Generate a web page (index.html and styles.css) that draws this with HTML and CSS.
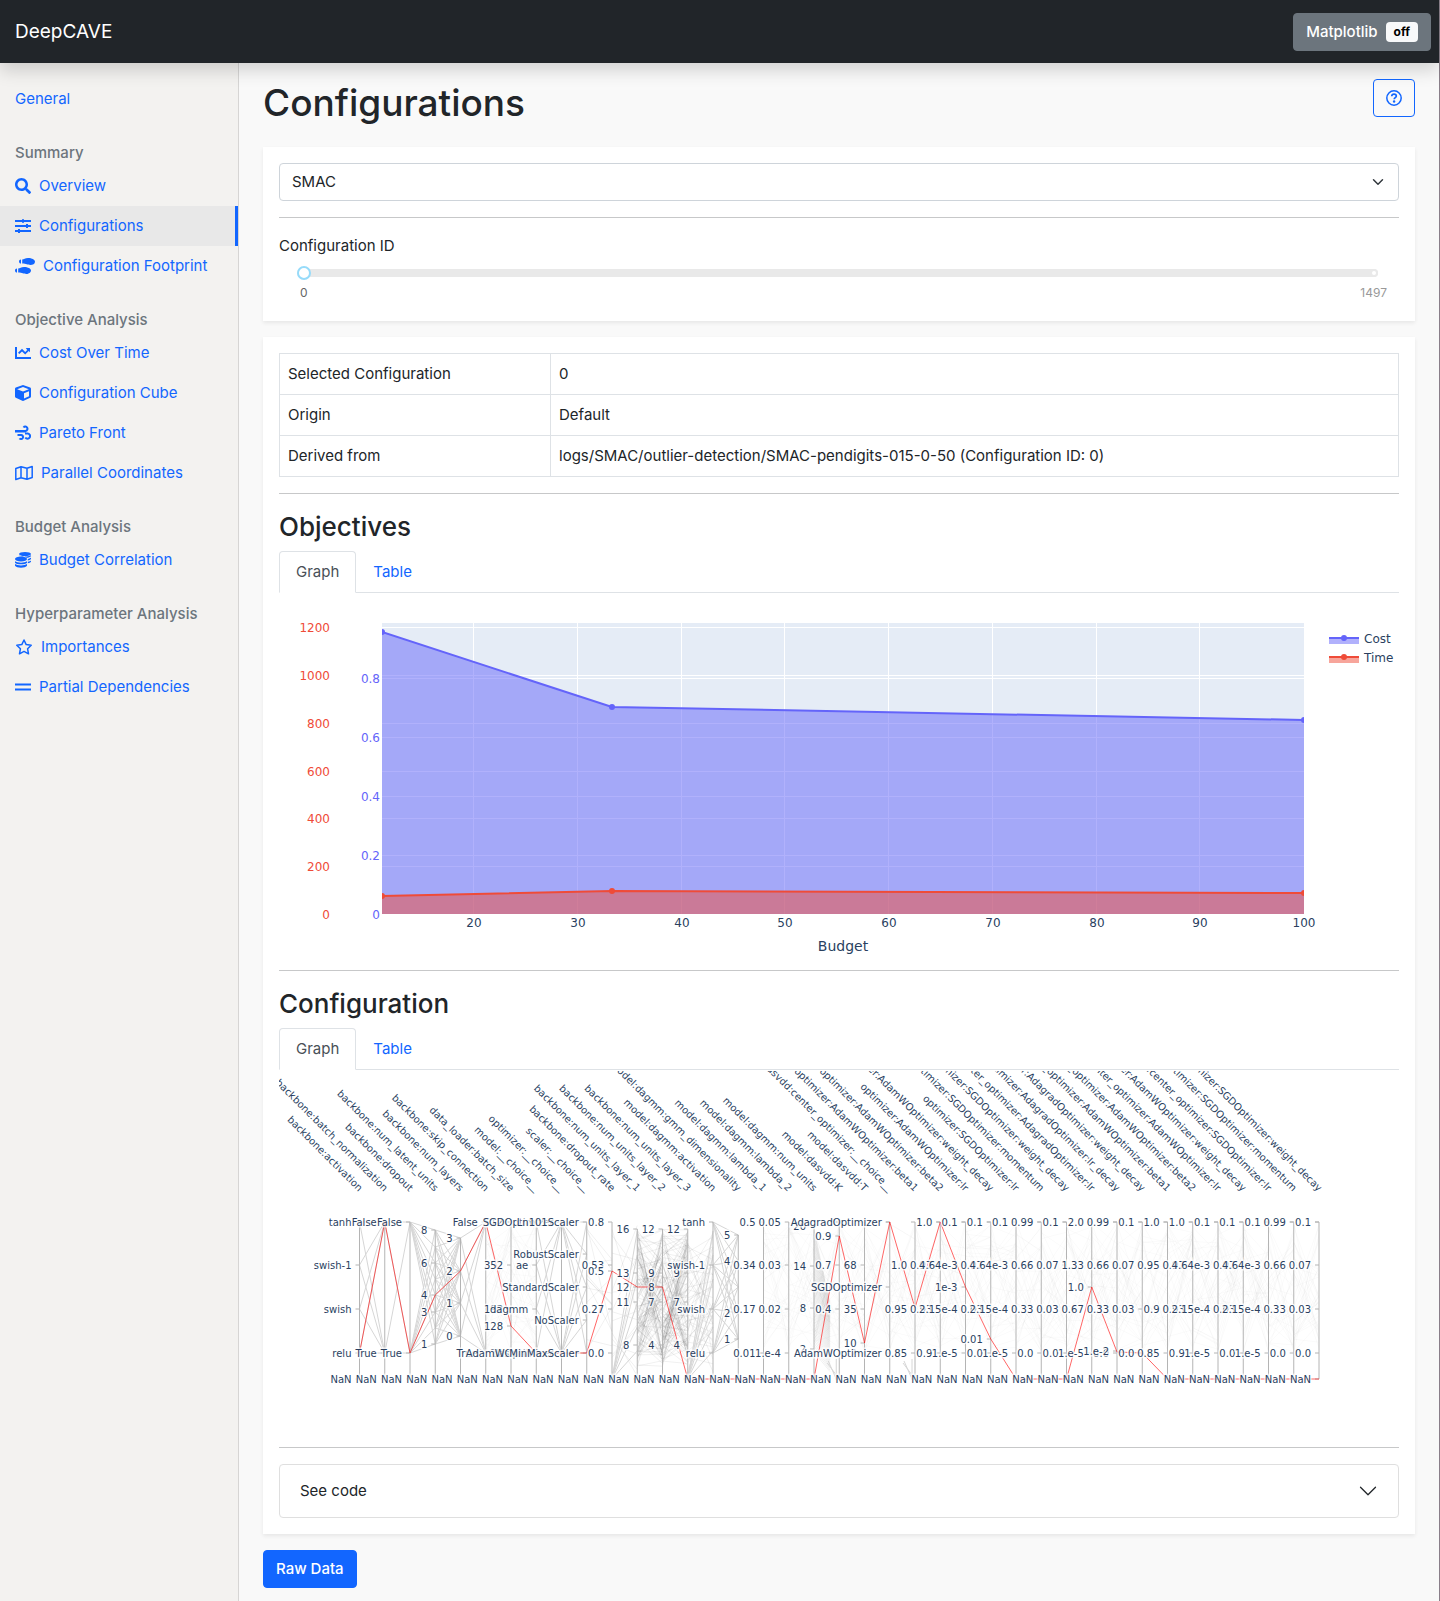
FILE: index.html
```html
<!DOCTYPE html>
<html lang="en">
<head>
<meta charset="utf-8">
<title>DeepCAVE</title>
<meta name="viewport" content="width=device-width, initial-scale=1">
<link rel="stylesheet" href="styles.css">
</head>
<body>
<div class="page">
  <header class="navbar">
    <a class="brand" href="#">DeepCAVE</a>
    <button class="btn btn-secondary" type="button">Matplotlib <span class="badge">off</span></button>
  </header>
  <div class="layout">
    <nav class="sidebar" aria-label="Plugins">
      <a class="nav-item" href="#">General</a>
      <h2 class="nav-heading">Summary</h2>
      <a class="nav-item" href="#">
        <svg class="icon" viewBox="0 0 512 512"><path d="M505 442.7L405.3 343c-4.5-4.5-10.6-7-17-7H372c27.6-35.3 44-79.7 44-128C416 93.1 322.9 0 208 0S0 93.1 0 208s93.1 208 208 208c48.3 0 92.7-16.4 128-44v16.3c0 6.4 2.5 12.5 7 17l99.7 99.7c9.4 9.4 24.6 9.4 33.9 0l28.3-28.3c9.4-9.4 9.4-24.6.1-34zM208 336c-70.7 0-128-57.2-128-128 0-70.7 57.2-128 128-128 70.7 0 128 57.2 128 128 0 70.7-57.2 128-128 128z"/></svg>
        Overview</a>
      <a class="nav-item active" href="#" aria-current="page">
        <svg class="icon" viewBox="0 0 16 16"><path d="M0 2h7V1.200h2V2h7v2H9v.8H7V4H0zM0 7h11v-.9h2V7h3v2h-3v.9h-2V9H0zM0 12h3v-.9h2v.9h11v2H5v.9H3V14H0z"/></svg>
        Configurations</a>
      <a class="nav-item" href="#">
        <svg class="icon icon-20" viewBox="0 0 20 16"><path d="M6 1.400v4.200C4.800 5.600 4 4.700 4 3.500s.8-2.100 2-2.100zM7.200 1.400C9 1.300 10 0 13 0c4 0 7 1.700 7 3.700C20 6 17.700 7 15.400 7c-2.800 0-4-1.400-8.200-1.400zM2 10.400v4.200c-1.200 0-2-.9-2-2.100s.8-2.100 2-2.100zM3.200 10.400C5 10.300 6 9 9 9c4 0 7 1.700 7 3.500S13.700 16 11.400 16c-2.800 0-4-1.400-8.200-1.400z"/></svg>
        Configuration Footprint</a>
      <h2 class="nav-heading">Objective Analysis</h2>
      <a class="nav-item" href="#">
        <svg class="icon" viewBox="0 0 16 16"><path d="M0 2h2v10h14v2H0zM10.800 3H15v4.300l-1.300-1.300-3.500 3.500L7 6.400 4.300 9.100 3 7.700l4-4L10.200 7l2-2z"/></svg>
        Cost Over Time</a>
      <a class="nav-item" href="#">
        <svg class="icon" viewBox="0 0 16 16"><path fill-rule="evenodd" d="M7.300.2q.7-.3 1.400 0l6.500 2.400q.8.400.8 1.300v7.600q0 .9-.8 1.300l-6.500 3q-.7.300-1.400 0l-6.500-3Q0 12.400 0 11.500V3.900q0-.9.800-1.300zM8 2.100L2.200 4.200 8 6.600l5.800-2.400zM9 8.300v5.300l5-2.300V6.200z"/></svg>
        Configuration Cube</a>
      <a class="nav-item" href="#">
        <svg class="icon stroked" viewBox="0 0 16 16"><path stroke-width="2" d="M0 6h10.500a2.200 2.200 0 1 0-2-3.500M0 6.500h10.500M10 8.500h2.800a2.600 2.600 0 1 1-2.500 4M2.500 10H6a2 2 0 1 1-1.500 3.300"/></svg>
        Pareto Front</a>
      <a class="nav-item" href="#">
        <svg class="icon icon-18 stroked" viewBox="0 0 18 16"><path stroke-width="1.500" stroke-linejoin="round" d="M.8 3.500L6 1.700l6 1.600 5.200-1.800v11L12 14.300l-6-1.600-5.200 1.800zM6 1.700v11M12 3.300v11"/></svg>
        Parallel Coordinates</a>
      <h2 class="nav-heading">Budget Analysis</h2>
      <a class="nav-item" href="#">
        <svg class="icon" viewBox="0 0 16 16"><ellipse cx="10" cy="2" rx="6" ry="2"/><ellipse cx="6" cy="7" rx="6" ry="2.500"/><path d="M4 3.500c2 1.400 9 1.500 12-.3v1c-.7.9-2.500 1.500-4.500 1.600C10 4.400 7 3.900 4 4.200zM12.800 7C14.200 6.700 15.400 6.200 16 5.600v1.300c-.5.700-1.700 1.200-3.200 1.500zM12.800 9.700c1.400-.3 2.600-.7 3.200-1.300v1.400c-.5.7-1.700 1.200-3.200 1.500zM0 9.200c2.500 1.900 9.500 1.900 12 0v1.500c-1.500 2-10.500 2-12 0zM0 12.100c2.500 1.700 9.500 1.700 12 0v1.700c-1.500 2.600-10.500 2.600-12 0z"/></svg>
        Budget Correlation</a>
      <h2 class="nav-heading">Hyperparameter Analysis</h2>
      <a class="nav-item" href="#">
        <svg class="icon icon-18 stroked" viewBox="0 0 18 16"><path stroke-width="1.500" stroke-linejoin="round" d="M9 1l2.200 4.600 5 .7-3.600 3.500.9 5L9 12.400l-4.500 2.400.9-5L1.800 6.300l5-.7z"/></svg>
        Importances</a>
      <a class="nav-item" href="#">
        <svg class="icon" viewBox="0 0 16 16"><path d="M0 4.500h16v2H0zM0 9.500h16v2H0z"/></svg>
        Partial Dependencies</a>
    </nav>

    <main class="content">
      <div class="title-row">
        <h1>Configurations</h1>
        <button class="btn btn-outline" type="button" aria-label="Help">
          <svg class="icon" viewBox="0 0 16 16"><circle cx="8" cy="8" r="7.200" fill="none" stroke="currentColor" stroke-width="1.500"/><path d="M5.700 6.300C5.800 4.800 6.800 4.200 8 4.200c1.300 0 2.300.8 2.300 1.900 0 1.600-2.100 1.500-2.100 3.100" fill="none" stroke="currentColor" stroke-width="1.700"/><circle cx="8.100" cy="11.500" r="1.200"/></svg>
        </button>
      </div>

      <section class="card">
        <select class="select" aria-label="Run"><option>SMAC</option></select>
        <hr>
        <label class="field-label" for="config-id">Configuration ID</label>
        <div class="slider">
          <input id="config-id" type="range" min="0" max="1497" value="0">
          <span class="slider-dot"></span>
        </div>
        <div class="marks"><span class="mark-active">0</span><span>1497</span></div>
      </section>

      <section class="card">
        <table class="table">
          <tbody>
            <tr><td>Selected Configuration</td><td>0</td></tr>
            <tr><td>Origin</td><td>Default</td></tr>
            <tr><td>Derived from</td><td>logs/SMAC/outlier-detection/SMAC-pendigits-015-0-50 (Configuration ID: 0)</td></tr>
          </tbody>
        </table>
        <hr>
        <h3>Objectives</h3>
        <div class="tabs"><a class="tab selected" href="#">Graph</a><a class="tab" href="#">Table</a></div>
        <svg class="chart" id="objectives" viewBox="0 0 1120 360" role="img" aria-label="Cost and time over budget"></svg>
        <hr>
        <h3>Configuration</h3>
        <div class="tabs"><a class="tab selected" href="#">Graph</a><a class="tab" href="#">Table</a></div>
        <svg class="chart parallel" id="parallel" viewBox="0 0 1120 360" role="img" aria-label="Configuration parallel coordinates"></svg>
        <hr>
        <button class="accordion" type="button" aria-expanded="false">See code
          <svg class="chevron" viewBox="0 0 16 16"><path fill="none" stroke="currentColor" stroke-linecap="round" stroke-linejoin="round" d="M2 5l6 6 6-6"/></svg>
        </button>
      </section>
      <button class="btn btn-primary" type="button">Raw Data</button>
    </main>
  </div>
</div>
<script src="charts.js"></script>
</body>
</html>
```

FILE: styles.css
```css
* { box-sizing: border-box; }

body {
  margin: 0;
  background: #f9f9f9;
  color: #212529;
  font: 400 15px/24px Inter, "Liberation Sans", sans-serif;
}

.page {
  display: flex;
  flex-direction: column;
  min-height: 100vh;
  border-right: 1px solid #8a7f8a;
}

.navbar {
  position: relative;
  z-index: 1;
  display: flex;
  align-items: center;
  justify-content: space-between;
  height: 63px;
  padding: 0 8px 0 15px;
  background: #212529;
  box-shadow: 0 8px 16px rgba(0, 0, 0, .15);
}

.brand {
  color: #fff;
  font-size: 19px;
  text-decoration: none;
}

.btn {
  display: inline-flex;
  align-items: center;
  gap: 8px;
  height: 38px;
  padding: 0 12px;
  border: 1px solid transparent;
  border-radius: 4px;
  font: inherit;
  cursor: pointer;
}

.btn-secondary { background: #6c757d; border-color: #6c757d; color: #fff; font-weight: 500; }
.btn-primary { background: #1266ff; border-color: #1266ff; color: #fff; font-weight: 500; }
.btn-outline { background: transparent; border-color: #1266ff; color: #1266ff; }

.badge {
  padding: 4px 8px;
  border-radius: 4px;
  background: #f8f9fa;
  color: #000;
  font-size: 12px;
  font-weight: 700;
  line-height: 12px;
}

.layout {
  display: grid;
  grid-template-columns: 239px 1fr;
  flex: 1;
}

.sidebar {
  padding-top: 16px;
  border-right: 1px solid #d6d5d4;
  background: #f3f2f0;
}

.nav-item {
  display: flex;
  align-items: center;
  gap: 8px;
  height: 40px;
  padding-left: 15px;
  color: #1266ff;
  line-height: 26px;
  text-decoration: none;
  white-space: nowrap;
}

.nav-item.active {
  border-right: 3px solid #1266ff;
  background: #e8e8e8;
}

.nav-heading {
  margin: 0;
  padding: 22px 0 1px 15px;
  color: #6c757d;
  font-size: 15px;
  font-weight: 500;
  line-height: 24px;
}

.icon { width: 16px; height: 16px; flex: none; fill: currentColor; }
.icon-18 { width: 18px; }
.icon-20 { width: 20px; }
.stroked { fill: none; stroke: currentColor; }

.content { min-width: 0; padding: 16px 24px 12px; }

.title-row {
  display: flex;
  align-items: flex-start;
  justify-content: space-between;
  margin-bottom: 20px;
}

h1, h3 { margin: 0; font-weight: 500; }
h1 { font-size: 37px; line-height: 48px; }
h3 { margin-bottom: 7px; font-size: 26px; line-height: 34px; }

.card {
  margin-bottom: 16px;
  padding: 16px;
  background: #fff;
  box-shadow: 0 2px 4px rgba(0, 0, 0, .075);
}

hr {
  height: 1px;
  margin: 16px 0;
  border: 0;
  background: #c7c8c9;
}

.select {
  display: block;
  width: 100%;
  height: 38px;
  padding: 0 12px;
  border: 1px solid #ced4da;
  border-radius: 4px;
  appearance: none;
  background: #fff url("data:image/svg+xml,%3Csvg xmlns='http://www.w3.org/2000/svg' viewBox='0 0 16 16'%3E%3Cpath fill='none' stroke='%23343a40' stroke-linecap='round' stroke-linejoin='round' stroke-width='2' d='M2 5l6 6 6-6'/%3E%3C/svg%3E") no-repeat right 14px center / 12px 12px;
  color: inherit;
  font: inherit;
}

.field-label { display: block; }

.slider { position: relative; height: 30px; padding: 0 21px 0 18px; }

.slider input {
  display: block;
  width: 100%;
  height: 30px;
  margin: 0;
  appearance: none;
  background: transparent;
}

.slider input::-webkit-slider-runnable-track {
  height: 8px;
  border-radius: 4px;
  background: #e9e9e9;
}

.slider input::-webkit-slider-thumb {
  width: 14px;
  height: 14px;
  margin-top: -3px;
  border: 2px solid #96dbfa;
  border-radius: 50%;
  appearance: none;
  background: #fff;
}

.slider-dot {
  position: absolute;
  top: 11px;
  right: 21px;
  width: 8px;
  height: 8px;
  border: 2px solid #e9e9e9;
  border-radius: 50%;
  background: #fff;
}

.marks {
  display: flex;
  justify-content: space-between;
  height: 17px;
  padding: 0 12px 0 21px;
  color: #999;
  font-size: 12px;
  line-height: 10px;
}

.mark-active { color: #666; }

.table {
  width: 100%;
  border-collapse: collapse;
}

.table td {
  height: 41px;
  padding: 8px;
  border: 1px solid #dee2e6;
  line-height: 24px;
}

.table td:first-child { width: 271px; }

.tabs { display: flex; margin-bottom: 1px; border-bottom: 1px solid #dee2e6; }

.tab {
  height: 42px;
  margin-bottom: -1px;
  padding: 8px 16px;
  border: 1px solid transparent;
  border-radius: 4px 4px 0 0;
  color: #1266ff;
  text-decoration: none;
}

.tab.selected {
  border-color: #dee2e6 #dee2e6 #fff;
  background: #fff;
  color: #495057;
}

.chart {
  display: block;
  width: 100%;
  height: auto;
  overflow: visible;
  fill: #2a3f5f;
  font: 12px "DejaVu Sans", Verdana, sans-serif;
}

.chart .end { text-anchor: end; }
.chart .middle { text-anchor: middle; }
.chart .axis-title { font-size: 14px; }
.chart .cost-text { fill: #6464fa; }
.chart .time-text { fill: #ef4b38; }
.chart .grid { stroke: #fff; }
.chart .cost-line, .chart .time-line { fill: none; stroke-width: 2; }
.chart .cost-line { stroke: #6464fa; }
.chart .time-line { stroke: #ef4b38; }
.chart .cost-dot { fill: #6464fa; }
.chart .time-dot { fill: #ef4b38; }
.chart .cost-area { fill: rgba(99, 99, 250, .5); }
.chart .time-area { fill: rgba(239, 75, 56, .5); }

.parallel { overflow: hidden; font-size: 10px; }
.parallel path { fill: none; }
.parallel .axis { stroke: #b4b4b4; }
.parallel .mesh { stroke: #d6d6d6; }
.parallel .faint { stroke: #000; stroke-opacity: .018; }
.parallel .dense { stroke: #000; stroke-opacity: .06; }
.parallel .chosen { stroke: #f00; stroke-opacity: .6; }
.parallel .tick {
  stroke: #fff;
  stroke-width: 3px;
  stroke-opacity: .75;
  paint-order: stroke;
}

.accordion {
  display: flex;
  align-items: center;
  justify-content: space-between;
  width: 100%;
  height: 54px;
  padding: 0 20px;
  border: 1px solid #dfdfdf;
  border-radius: 4px;
  background: #fff;
  color: inherit;
  font: inherit;
}

.chevron { width: 20px; height: 20px; }
```

FILE: charts.js
```js
// Objectives: two filled traces on a shared budget axis.
(function () {
  var out = '<clipPath id="plot"><rect x="103" y="29" width="922" height="291"/></clipPath>' +
    '<rect x="103" y="29" width="922" height="291" fill="#e5ecf6"/>';
  var budgets = [20, 30, 40, 50, 60, 70, 80, 90, 100];
  function bx(v) { return Math.round(195 + (v - 20) * 10.375); }
  budgets.forEach(function (v) {
    if (v < 100) out += '<path class="grid" d="M' + (bx(v) - 0.5) + ' 29V320"/>';
    out += '<text class="middle" x="' + bx(v) + '" y="333">' + v + '</text>';
  });
  [1200, 1000, 800, 600, 400, 200, 0].forEach(function (v) {
    var y = Math.round(320 - v * 0.239);
    if (v) out += '<path class="grid" d="M103 ' + (y + 0.5) + 'H1025"/>';
    out += '<text class="end time-text" x="51" y="' + (y + 5) + '">' + v + '</text>';
  });
  [0.8, 0.6, 0.4, 0.2, 0].forEach(function (v) {
    var y = Math.round(320 - v * 295);
    if (v) out += '<path class="grid" d="M103 ' + (y + 0.5) + 'H1025"/>';
    out += '<text class="end cost-text" x="101" y="' + (y + 5) + '">' + v + '</text>';
  });
  function trace(kind, pts) {
    var line = 'M' + pts.map(function (p) { return p.join(' '); }).join('L');
    out += '<g clip-path="url(#plot)"><path class="' + kind + '-area" d="' + line + 'V320H103z"/>' +
      '<path class="' + kind + '-line" d="' + line + '"/>';
    pts.forEach(function (p) {
      out += '<circle class="' + kind + '-dot" cx="' + p[0] + '" cy="' + p[1] + '" r="3"/>';
    });
    out += '</g>';
  }
  trace('cost', [[103, 38], [333, 113], [1025, 126]]);
  trace('time', [[103, 302], [333, 297], [1025, 299]]);
  [['cost', 'Cost', 44], ['time', 'Time', 63]].forEach(function (l) {
    out += '<rect class="' + l[0] + '-area" x="1050" y="' + l[2] + '" width="30" height="6"/>' +
      '<path class="' + l[0] + '-line" d="M1050 ' + l[2] + 'h30"/>' +
      '<circle class="' + l[0] + '-dot" cx="1065" cy="' + l[2] + '" r="3"/>' +
      '<text x="1085" y="' + (l[2] + 5) + '">' + l[1] + '</text>';
  });
  out += '<text class="middle axis-title" x="564" y="357">Budget</text>';
  document.getElementById('objectives').innerHTML = out;
})();

// Configuration: parallel coordinates over all hyperparameters.
(function () {
  var TOP = 151, BOTTOM = 282, NAN = 308;
  function four(a, b, c, d) { return [[a, 151], [b, 194], [c, 238], [d, 282]]; }
  var A = 'AdamWOptimizer', S = 'SGDOptimizer', G = 'AdagradOptimizer';
  var c = 'model:dasvdd:center_optimizer:';
  var unit = [[12, 158], [9, 202], [7, 231], [4, 274]];
  var lr = ['0.1', '4.64e-3', '2.15e-4', '1.e-5'];
  var axes = [
    ['backbone:activation', four('tanh', 'swish-1', 'swish', 'relu')],
    ['backbone:batch_normalization', [['False', 151], ['True', 282]]],
    ['backbone:dropout', [['False', 151], ['True', 282]]],
    ['backbone:num_latent_units', [[8, 159], [6, 192], [4, 224], [3, 241], [1, 273]]],
    ['backbone:num_layers', [[3, 167], [2, 200], [1, 232], [0, 265]]],
    ['backbone:skip_connection', [['False', 151], ['True', 282]]],
    ['data_loader:batch_size', four('512', '352', '192', '32').concat([['128', 255]])],
    ['model:__choice__', [['ae', 194], ['dagmm', 238], ['dasvdd', 282]]],
    ['optimizer:__choice__', [[S, 151], [A, 282]]],
    ['scaler:__choice__', [['Ln101Scaler', 151], ['RobustScaler', 183], ['StandardScaler', 216], ['NoScaler', 249], ['MinMaxScaler', 282]]],
    ['backbone:dropout_rate', four('0.8', '0.53', '0.27', '0.0').concat([['0.5', 200]])],
    ['backbone:num_units_layer_1', [[16, 158], [13, 202], [12, 216], [11, 231], [8, 274]]],
    ['backbone:num_units_layer_2', unit.concat([[8, 216]])],
    ['backbone:num_units_layer_3', unit],
    ['model:dagmm:activation', four('tanh', 'swish-1', 'swish', 'relu')],
    ['model:dagmm:gmm_dimensionality', [[5, 164], [4, 190], [2, 242], [1, 268]]],
    ['model:dagmm:lambda_1', four('0.5', '0.34', '0.17', '0.01')],
    ['model:dagmm:lambda_2', four('0.05', '0.03', '0.02', '1.e-4')],
    ['model:dagmm:num_units', [[20, 155], [14, 195], [8, 237], [2, 278]]],
    ['model:dasvdd:K', [['0.9', 165], ['0.7', 194], ['0.4', 238]]],
    ['model:dasvdd:T', [['68', 194], ['35', 238], ['10', 272], ['2', 282]]],
    [c + '__choice__', [[G, 151], [S, 216], [A, 282]]],
    ['optimizer:' + A + ':beta1', [['1.0', 194], ['0.95', 238], ['0.85', 282]]],
    ['optimizer:' + A + ':beta2', four('1.0', '0.97', '0.93', '0.9')],
    ['optimizer:' + A + ':lr', four.apply(null, lr).concat([['1e-3', 216]])],
    ['optimizer:' + A + ':weight_decay', four('0.1', '0.07', '0.03', '0.0').concat([['0.01', 268]])],
    ['optimizer:' + S + ':lr', four.apply(null, lr)],
    ['optimizer:' + S + ':momentum', four('0.99', '0.66', '0.33', '0.0')],
    ['optimizer:' + S + ':weight_decay', four('0.1', '0.07', '0.03', '0.0')],
    [c + G + ':lr', four('2.0', '1.33', '0.67', '1.e-5').concat([['1.0', 216]])],
    [c + G + ':lr_decay', four('0.99', '0.66', '0.33', '0.0').concat([['1.e-2', 280]])],
    [c + G + ':weight_decay', four('0.1', '0.07', '0.03', '0.0')],
    [c + A + ':beta1', four('1.0', '0.95', '0.9', '0.85')],
    [c + A + ':beta2', four('1.0', '0.97', '0.93', '0.9')],
    [c + A + ':lr', four.apply(null, lr)],
    [c + A + ':weight_decay', four('0.1', '0.07', '0.03', '0.0')],
    [c + S + ':lr', four.apply(null, lr)],
    [c + S + ':momentum', four('0.99', '0.66', '0.33', '0.0')],
    [c + S + ':weight_decay', four('0.1', '0.07', '0.03', '0.0')]
  ];
  function ax(i) { return 80.5 + i * 25.25; }

  var seed = 7;
  function rnd() { seed = (seed * 16807) % 2147483647; return seed / 2147483647; }
  function seg(i, a, b) { return 'M' + ax(i) + ' ' + a + 'L' + ax(i + 1) + ' ' + b; }

  var mesh = '', faint = '', dense = '';
  function cross(i, left, right) {
    left.forEach(function (a) { right.forEach(function (b) { mesh += seg(i, a, b); }); });
  }
  var two = [151, 282], cats = [151, 194, 238, 282];
  var latent = [159, 176, 192, 208, 224, 241, 257, 273], layers = [167, 200, 232, 265];
  var scalers = [151, 183, 216, 249, 282], gmm = [164, 190, 216, 242, 268];
  cross(0, cats, two);
  cross(1, two, two);
  cross(2, two, latent);
  cross(3, latent, layers);
  cross(4, layers, two);
  cross(7, cats, two);
  cross(8, two, scalers);
  cross(14, cats, gmm);
  function scatter(i, n, high, low) {
    var d = '';
    while (n--) d += seg(i, high + rnd() * (low - high), high + rnd() * (low - high));
    return d;
  }
  [11, 12].forEach(function (i) { dense += scatter(i, 120, 158, 296); });
  dense += scatter(13, 45, 158, NAN) + scatter(10, 14, TOP, NAN) + scatter(9, 12, TOP, BOTTOM);
  for (var k = 0; k < 38; k++) if (k > 15 || k === 5 || k === 6) faint += scatter(k, 38, TOP, BOTTOM);
  // Fan leaving the num_units axis.
  for (var y = 158; y < 284; y += 3) dense += 'M' + ax(18) + ' ' + y + 'l16 ' + (75 - (y - 158) * 0.45);
  [10, 13].forEach(function (i) {
    for (var t = 160; t < 300; t += 24) mesh += seg(i, NAN, t);
  });
  [19, 22].forEach(function (i) {
    mesh += 'M' + (ax(i) - 12) + ' 292L' + ax(i) + ' 308m-3 -20v20l-8 -18';
  });
  var out = '<path class="faint" d="' + faint + '"/>';
  // Overlapping light strokes darken each other, so each one is its own path.
  dense.split('M').slice(1).forEach(function (d) { out += '<path class="dense" d="M' + d + '"/>'; });
  mesh.split('M').slice(1).forEach(function (d) { out += '<path class="mesh" d="M' + d + '"/>'; });

  axes.forEach(function (a, i) {
    var ys = a[1].map(function (t) { return t[1]; });
    if (i > 18 || i === 7) ys.push(TOP);
    out += '<path class="axis" d="M' + ax(i) + ' ' + Math.min.apply(null, ys) + 'V' + NAN;
    ys.concat([NAN]).forEach(function (v) { out += 'M' + ax(i) + ' ' + v + 'h-4'; });
    out += '"/>';
  });

  var pick = [282, 151, 282, 224, 200, 151, 255, 282, 282, 282, 200, 216, 216, 308, 308, 308, 308, 308, 308,
    165, 272, 151, 237, 151, 216, 268, 308, 308, 308, 216, 281, 282, 308, 308, 308, 308, 308, 308, 308];
  out += '<path class="chosen" d="M' + pick.map(function (v, i) { return ax(i) + ' ' + v; }).join('L') + '"/>';

  axes.forEach(function (a, i) {
    a[1].concat([['NaN', NAN]]).forEach(function (t) {
      out += '<text class="tick end" x="' + (ax(i) - 8) + '" y="' + (t[1] + 4) + '">' + t[0] + '</text>';
    });
    out += '<text class="end" transform="translate(' + (ax(i) - 1) + ' 121) rotate(45)">' + a[0] + '</text>';
  });
  document.getElementById('parallel').innerHTML = out;
})();
```
